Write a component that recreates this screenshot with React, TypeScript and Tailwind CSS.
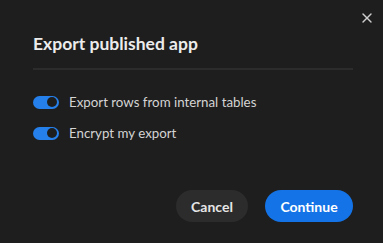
import { X } from "lucide-react";

function Toggle() {
  return (
    <div className="flex h-[13px] w-[26px] items-center justify-end rounded-full bg-[#2680eb] pr-[2px]">
      <div className="h-[10px] w-[10px] rounded-full bg-[#1e1e1e]" />
    </div>
  );
}

export default function App() {
  return (
    <div className="relative h-[243px] w-[383px] bg-[#1e1e1e] font-['Lato',sans-serif]">
      <button className="absolute right-[8px] top-[10px] text-[#cfcfcf]">
        <X size={16} strokeWidth={2} />
      </button>
      <div className="pl-[33px] pr-[30px] pt-[33px]">
        <h2 className="text-[17.5px] font-bold leading-[22px] text-[#ececec]">Export published app</h2>
        <div className="mt-[13px] h-[2px] w-full bg-[#2c2c2c]" />
        <div className="mt-[25px] flex flex-col gap-[17px]">
          <label className="flex items-center gap-[10px]">
            <Toggle />
            <span className="text-[13.3px] leading-[14px] text-[#d4d4d4]">Export rows from internal tables</span>
          </label>
          <label className="flex items-center gap-[10px]">
            <Toggle />
            <span className="text-[13.3px] leading-[14px] text-[#d4d4d4]">Encrypt my export</span>
          </label>
        </div>
        <div className="mt-[50px] flex justify-end gap-[17px]">
          <button className="h-[32px] w-[72px] rounded-full bg-[#2c2c2c] text-[14px] font-bold text-[#e6e6e6]">Cancel</button>
          <button className="h-[32px] w-[88px] rounded-full bg-[#1473e6] text-[14px] font-bold text-white">Continue</button>
        </div>
      </div>
    </div>
  );
}
